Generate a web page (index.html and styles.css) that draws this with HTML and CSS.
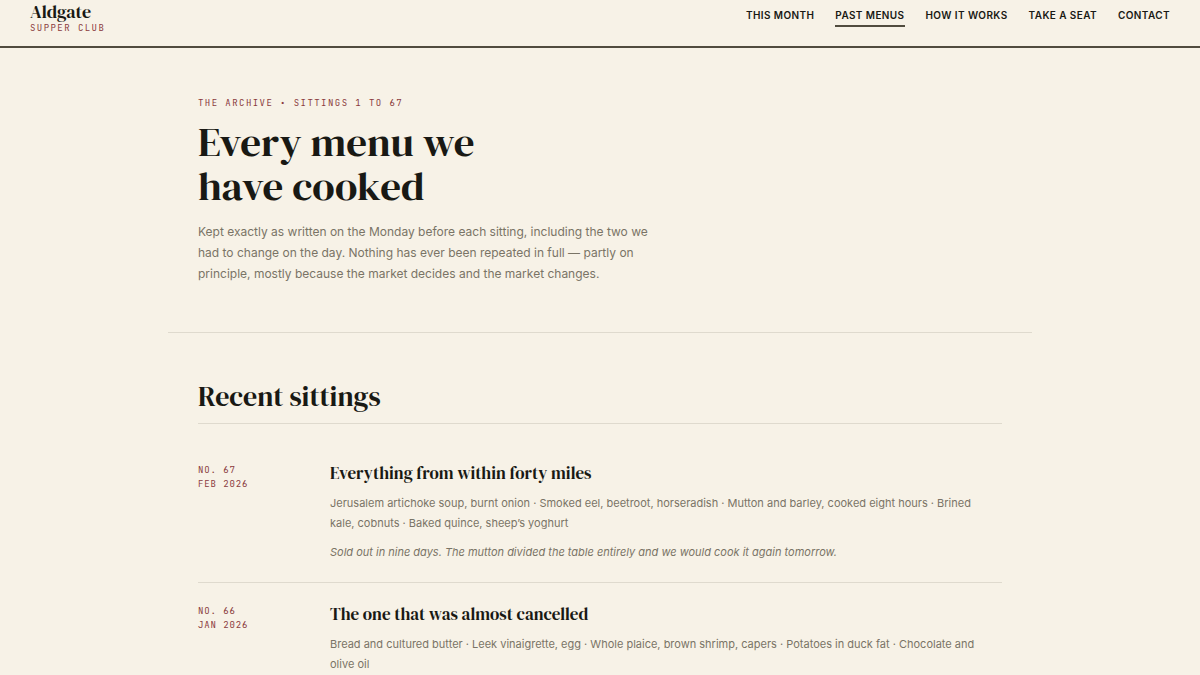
FILE: index.html
```html
<!DOCTYPE html>
<html lang="en">
<head>
    <meta charset="UTF-8">
    <meta name="viewport" content="width=device-width, initial-scale=1.0">
    <title>Past menus - Aldgate Supper Club</title>
    <link rel="stylesheet" href="styles.css">
</head>
<body>
    <header class="site-header">
        <a class="brand" href="#">
            <span class="brand-name">Aldgate</span>
            <span class="brand-sub">SUPPER CLUB</span>
        </a>
        <nav class="site-nav">
            <a href="#">THIS MONTH</a>
            <a class="active" href="#">PAST MENUS</a>
            <a href="#">HOW IT WORKS</a>
            <a href="#">TAKE A SEAT</a>
            <a href="#">CONTACT</a>
        </nav>
    </header>
    <main>
        <section class="hero">
            <p class="eyebrow">THE ARCHIVE • SITTINGS 1 TO 67</p>
            <h1>Every menu we<br>have cooked</h1>
            <p class="lead">Kept exactly as written on the Monday before each sitting, including the two we had to change on the day. Nothing has ever been repeated in full — partly on principle, mostly because the market decides and the market changes.</p>
        </section>
        <section class="sittings">
            <h2>Recent sittings</h2>
            <article class="sitting">
                <p class="date">NO. 67<br>FEB 2026</p>
                <div>
                    <h3>Everything from within forty miles</h3>
                    <p class="menu">Jerusalem artichoke soup, burnt onion · Smoked eel, beetroot, horseradish · Mutton and barley, cooked eight hours · Brined kale, cobnuts · Baked quince, sheep’s yoghurt</p>
                    <p class="note">Sold out in nine days. The mutton divided the table entirely and we would cook it again tomorrow.</p>
                </div>
            </article>
            <article class="sitting">
                <p class="date">NO. 66<br>JAN 2026</p>
                <div>
                    <h3>The one that was almost cancelled</h3>
                    <p class="menu">Bread and cultured butter · Leek vinaigrette, egg · Whole plaice, brown shrimp, capers · Potatoes in duck fat · Chocolate and olive oil</p>
                </div>
            </article>
        </section>
    </main>
</body>
</html>
```
FILE: styles.css
```css
* {
    box-sizing: border-box;
}

body {
    margin: 0;
    background-color: #f7f2e7;
    color: #191914;
    font-family: Inter, sans-serif;
    font-size: 12px;
}

h1, h2, h3, p {
    margin: 0;
}

h1, h2, h3, .brand-name {
    font-family: "DM Serif Display", "Liberation Serif", serif;
    font-weight: 400;
}

a {
    color: inherit;
    text-decoration: none;
}

.site-header {
    display: flex;
    justify-content: space-between;
    align-items: flex-start;
    padding: 2px 30px 12px;
    border-bottom: 2px solid #514c3f;
}

.brand {
    display: flex;
    flex-direction: column;
}

.brand-name {
    font-size: 18px;
    line-height: 20px;
}

.brand-sub, .eyebrow, .date {
    color: #8a3b3d;
    font-family: "JetBrains Mono", "DejaVu Sans Mono", monospace;
    font-size: 9px;
    line-height: 14px;
}

.brand-sub, .eyebrow {
    letter-spacing: 0.16em;
}

.brand-sub {
    line-height: 12px;
}

.site-nav {
    display: flex;
    gap: 21px;
    padding-top: 6px;
}

.site-nav a {
    padding-bottom: 3px;
    border-bottom: 2px solid transparent;
    font-size: 10px;
    font-weight: 600;
    line-height: 14px;
    letter-spacing: 0.04em;
}

.site-nav .active {
    border-bottom-color: #514c3f;
}

main {
    max-width: 864px;
    margin: 0 auto;
}

.hero {
    padding: 48px 30px;
    border-bottom: 1px solid #dfdace;
}

h1 {
    margin: 10px 0 13px;
    font-size: 41px;
    line-height: 44px;
}

.lead {
    max-width: 460px;
    color: #7a7466;
    line-height: 21px;
}

.sittings {
    padding: 48px 30px;
}

h2 {
    padding-bottom: 12px;
    border-bottom: 1px solid #dfdace;
    font-size: 28px;
    line-height: 30px;
}

.sitting {
    display: grid;
    grid-template-columns: 110px 1fr;
    gap: 22px;
    padding: 20px 0;
    border-bottom: 1px solid #dfdace;
}

h2 + .sitting {
    padding-top: 38px;
}

.date {
    padding-top: 1px;
    letter-spacing: 0.1em;
}

h3 {
    margin-bottom: 9px;
    font-size: 17px;
    line-height: 22px;
}

.menu, .note {
    max-width: 660px;
    color: #7a7466;
    font-size: 11px;
    line-height: 20px;
}

.note {
    margin-top: 9px;
    font-style: italic;
}
```
